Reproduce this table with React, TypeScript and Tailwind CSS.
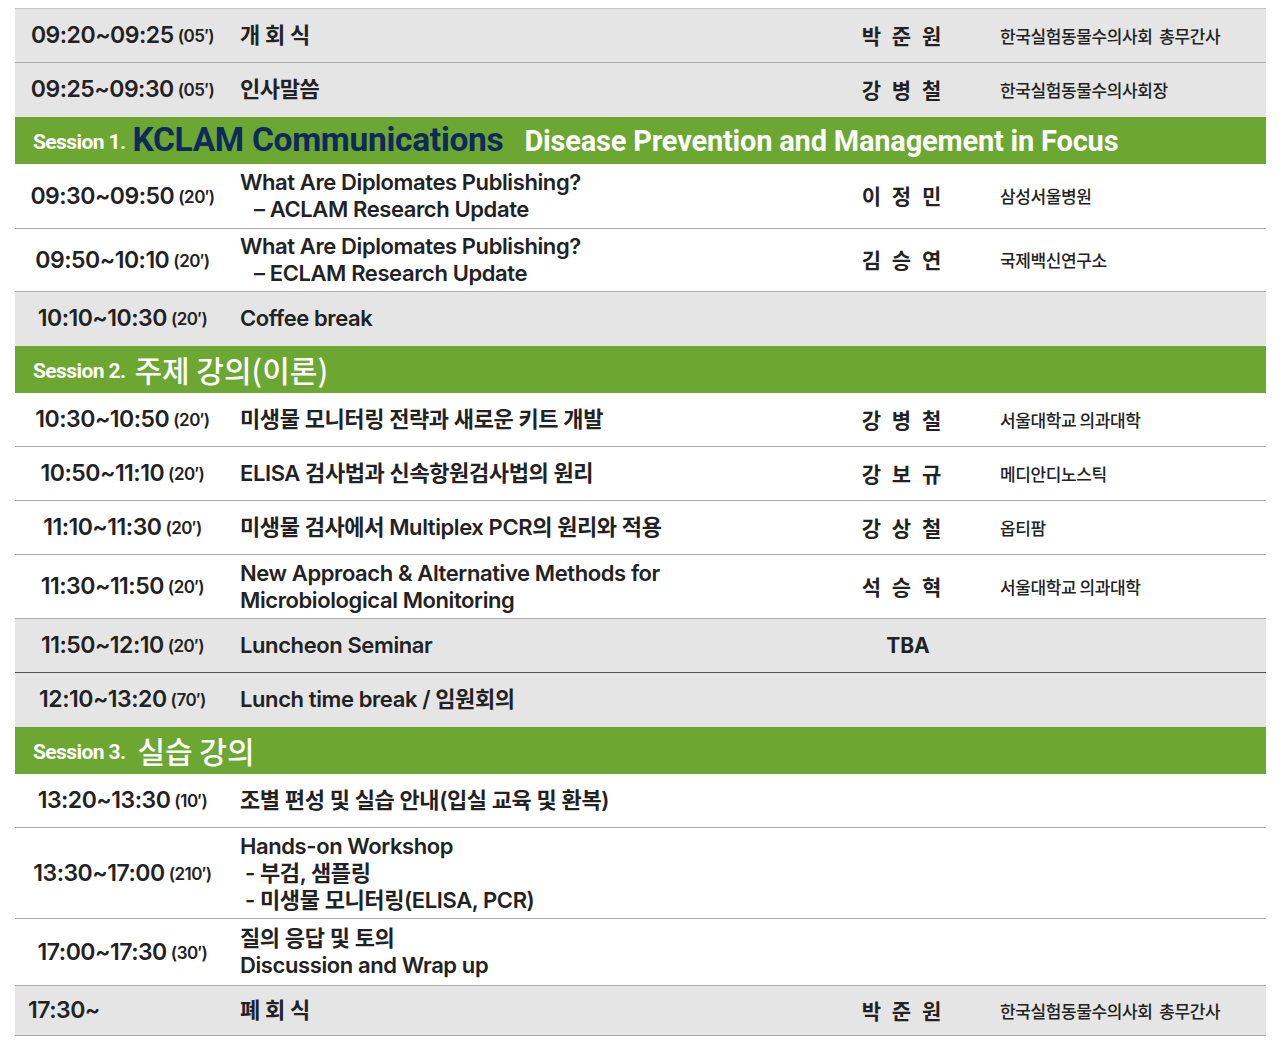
type Row = {
  time: string;
  dur?: string;
  title: React.ReactNode;
  speaker?: string;
  org?: string;
  gray?: boolean;
  h: string;
  left?: boolean;
  border?: string;
};

const sans = "font-['Inter','Noto_Sans_CJK_KR',sans-serif]";
const roboto = "font-['Roboto','Noto_Sans_CJK_KR',sans-serif]";
const kr = "font-['Noto_Sans_CJK_KR',sans-serif]";

function TimeCell({ time, dur, left }: { time: string; dur?: string; left?: boolean }) {
  return (
    <div
      className={`flex items-center ${left ? 'justify-start pl-[13px]' : 'justify-center'} text-[23px] font-semibold tracking-[-0.5px]`}
    >
      <span>{time}</span>
      {dur && <span className="ml-[4px] mt-[3px] text-[17px] font-semibold">({dur}′)</span>}
    </div>
  );
}

function ScheduleRow({ row }: { row: Row }) {
  const isKo = row.speaker && row.speaker !== 'TBA';
  return (
    <div
      className={`grid grid-cols-[215px_610px_126px_1fr] ${row.h} ${row.gray ? 'bg-[#e5e5e5]' : 'bg-white'} border-b ${row.border ?? 'border-[#a9a9a9]'} text-[#222]`}
    >
      <TimeCell time={row.time} dur={row.dur} left={row.left} />
      <div className="flex flex-col justify-center pl-[10px] text-[22px] font-semibold leading-[27px] tracking-[-0.4px]">
        {row.title}
      </div>
      <div
        className={`flex items-center justify-center text-[21px] font-bold ${isKo ? `tracking-[3px] ${kr}` : 'pl-[10px]'}`}
      >
        {row.speaker}
      </div>
      <div className={`flex items-center whitespace-pre pl-[34px] text-[17px] font-medium tracking-[-0.4px] ${kr}`}>
        {row.org}
      </div>
    </div>
  );
}

function SessionHeader({ label, children }: { label: string; children: React.ReactNode }) {
  return (
    <div className={`flex h-[47px] items-center bg-[#6ba731] pl-[18px] ${roboto}`}>
      <span className="mt-[5px] text-[21px] font-bold tracking-[-0.6px] text-white">{label}</span>
      {children}
    </div>
  );
}

export default function App() {
  const top: Row[] = [
    { time: '09:20~09:25', dur: '05', title: '개 회 식', speaker: '박 준 원', org: '한국실험동물수의사회  총무간사', gray: true, h: 'h-[54px]' },
    { time: '09:25~09:30', dur: '05', title: '인사말씀', speaker: '강 병 철', org: '한국실험동물수의사회장', gray: true, h: 'h-[54px]', border: 'border-transparent' },
  ];
  const s1: Row[] = [
    {
      time: '09:30~09:50',
      dur: '20',
      title: (
        <>
          <span>What Are Diplomates Publishing?</span>
          <span className="pl-[14px]">– ACLAM Research Update</span>
        </>
      ),
      speaker: '이 정 민',
      org: '삼성서울병원',
      h: 'h-[65px]',
    },
    {
      time: '09:50~10:10',
      dur: '20',
      title: (
        <>
          <span>What Are Diplomates Publishing?</span>
          <span className="pl-[14px]">– ECLAM Research Update</span>
        </>
      ),
      speaker: '김 승 연',
      org: '국제백신연구소',
      h: 'h-[63px]',
    },
    { time: '10:10~10:30', dur: '20', title: 'Coffee break', gray: true, h: 'h-[54px]', border: 'border-transparent' },
  ];
  const s2: Row[] = [
    { time: '10:30~10:50', dur: '20', title: '미생물 모니터링 전략과 새로운 키트 개발', speaker: '강 병 철', org: '서울대학교 의과대학', h: 'h-[54px]' },
    { time: '10:50~11:10', dur: '20', title: 'ELISA 검사법과 신속항원검사법의 원리', speaker: '강 보 규', org: '메디안디노스틱', h: 'h-[54px]' },
    { time: '11:10~11:30', dur: '20', title: '미생물 검사에서 Multiplex PCR의 원리와 적용', speaker: '강 상 철', org: '옵티팜', h: 'h-[54px]' },
    {
      time: '11:30~11:50',
      dur: '20',
      title: (
        <>
          <span>New Approach &amp; Alternative Methods for</span>
          <span>Microbiological Monitoring</span>
        </>
      ),
      speaker: '석 승 혁',
      org: '서울대학교 의과대학',
      h: 'h-[64px]',
    },
    { time: '11:50~12:10', dur: '20', title: 'Luncheon Seminar', speaker: 'TBA', gray: true, h: 'h-[54px]', border: 'border-[#555]' },
    { time: '12:10~13:20', dur: '70', title: 'Lunch time break / 임원회의', gray: true, h: 'h-[54px]', border: 'border-transparent' },
  ];
  const s3: Row[] = [
    { time: '13:20~13:30', dur: '10', title: '조별 편성 및 실습 안내(입실 교육 및 환복)', h: 'h-[54px]' },
    {
      time: '13:30~17:00',
      dur: '210',
      title: (
        <>
          <span>Hands-on Workshop</span>
          <span className="pl-[5px]">- 부검, 샘플링</span>
          <span className="pl-[5px]">- 미생물 모니터링(ELISA, PCR)</span>
        </>
      ),
      h: 'h-[91px]',
    },
    {
      time: '17:00~17:30',
      dur: '30',
      title: (
        <>
          <span>질의 응답 및 토의</span>
          <span>Discussion and Wrap up</span>
        </>
      ),
      h: 'h-[67px]',
    },
    { time: '17:30~', title: '폐 회 식', speaker: '박 준 원', org: '한국실험동물수의사회  총무간사', gray: true, h: 'h-[50px]', left: true },
  ];

  return (
    <div className={`min-h-[1045px] w-[1280px] bg-white pt-[8px] ${sans}`}>
      <div className="ml-[15px] w-[1251px] border-t border-[#c8c8c8]">
        {top.map((r) => (
          <ScheduleRow key={r.time} row={r} />
        ))}
        <SessionHeader label="Session 1.">
          <span className="ml-[7px] text-[33.5px] font-bold tracking-[-0.3px] text-[#0e2a5c]">KCLAM Communications</span>
          <span className="ml-[21px] mt-[3px] text-[29px] font-bold tracking-[-0.2px] text-white">
            Disease Prevention and Management in Focus
          </span>
        </SessionHeader>
        {s1.map((r) => (
          <ScheduleRow key={r.time} row={r} />
        ))}
        <SessionHeader label="Session 2.">
          <span className={`ml-[9px] text-[30px] font-medium text-white ${kr}`}>주제 강의(이론)</span>
        </SessionHeader>
        {s2.map((r) => (
          <ScheduleRow key={r.time} row={r} />
        ))}
        <SessionHeader label="Session 3.">
          <span className={`ml-[12px] text-[30px] font-medium text-white ${kr}`}>실습 강의</span>
        </SessionHeader>
        {s3.map((r) => (
          <ScheduleRow key={r.time} row={r} />
        ))}
      </div>
    </div>
  );
}
